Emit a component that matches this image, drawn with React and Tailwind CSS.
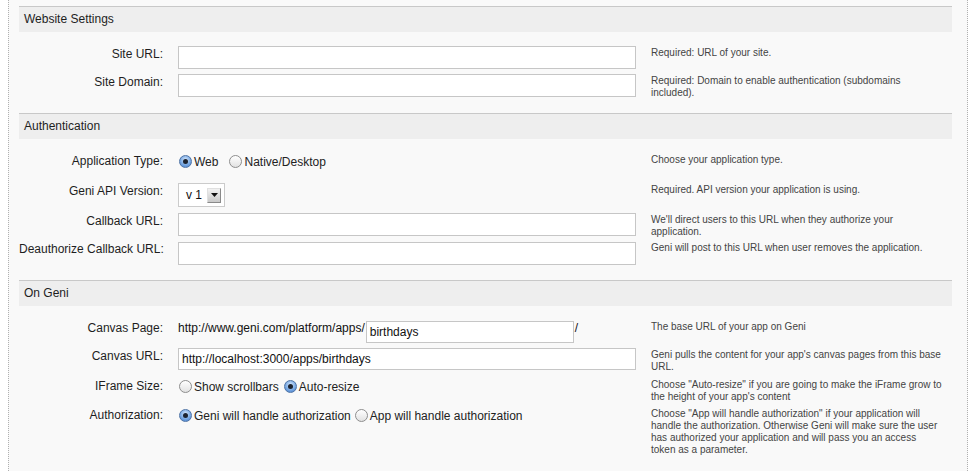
import React from 'react';

const Radio = ({ checked }) =>
  checked ? (
    <span className="flex h-[13px] w-[13px] shrink-0 items-center justify-center rounded-full border border-[#4f74a6] bg-[radial-gradient(circle_at_50%_35%,#d7e8fc,#7aaae4_55%,#3f78c8)]">
      <span className="h-[5px] w-[5px] rounded-full bg-[#1c2330]" />
    </span>
  ) : (
    <span className="block h-[13px] w-[13px] shrink-0 rounded-full border border-[#8e8e8e] bg-[linear-gradient(#ffffff,#e2e2e2)]" />
  );

const RadioOption = ({ checked, label, className = '' }) => (
  <label className={`flex h-[15px] items-center ${className}`}>
    <span className="ml-[1px] block">
      <Radio checked={checked} />
    </span>
    <span className="ml-[2px] leading-[14px] text-[#222]">{label}</span>
  </label>
);

const TextInput = ({ value = '', className = 'w-[458px] h-[23px]' }) => (
  <div className={`flex items-center border border-[#c6c6c6] bg-white pl-[3px] text-[12px] text-[#111] ${className}`}>
    {value}
  </div>
);

const Header = ({ title }) => (
  <div className="h-[26px] border-t border-[#c8c8c8] bg-[#eeeeee] pl-[5px] leading-[25px] text-[#1e1e1e]">
    {title}
  </div>
);

const Row = ({ label, height, help, children }) => (
  <div className="flex" style={height ? { height } : undefined}>
    <div className="mr-[15px] w-[144px] whitespace-nowrap pt-[1px] text-right leading-[14px] text-[#1e1e1e]">{label}</div>
    <div className="mr-[15px] w-[458px]">{children}</div>
    <div className="w-[301px] pt-[1px] pr-[10px] text-[10px] leading-[12px] text-[#444]">{help}</div>
  </div>
);

const Section = ({ title, children }) => (
  <div>
    <Header title={title} />
    <div className="pt-[14px] pb-[11px]">{children}</div>
  </div>
);

const VersionSelect = () => (
  <div className="flex h-[24px] w-[47px] items-center border border-[#cbcbcb] bg-white">
    <span className="ml-[7px] text-[12px] text-[#111]">v 1</span>
    <span className="ml-[5px] flex h-[15px] w-[14px] items-center justify-center border border-t-[#e0e0e0] border-l-[#e0e0e0] border-r-[#8a8a8a] border-b-[#8a8a8a] bg-[linear-gradient(#f2f2f2,#c9c9c9)]">
      <svg width="7" height="4" viewBox="0 0 7 4">
        <path d="M0 0h7L3.5 4z" fill="#111" />
      </svg>
    </span>
  </div>
);

export default function App() {
  return (
    <div className="min-h-screen bg-white font-['Liberation_Sans',Arial,sans-serif] text-[12px]">
      <div className="ml-[8px] min-h-screen w-[960px] border-x border-dotted border-[#b0b0b0] bg-[#f9f9f9] pt-[6px] pr-[15px] pl-[10px]">
        <Section title="Website Settings">
          <Row label="Site URL:" height={28} help="Required: URL of your site.">
            <TextInput />
          </Row>
          <Row label="Site Domain:" height={28} help="Required: Domain to enable authentication (subdomains included).">
            <TextInput />
          </Row>
        </Section>

        <Section title="Authentication">
          <Row label="Application Type:" height={30} help="Choose your application type.">
            <div className="flex pt-[1px]">
              <RadioOption checked label="Web" className="mr-[10px]" />
              <RadioOption label="Native/Desktop" />
            </div>
          </Row>
          <Row label="Geni API Version:" height={30} help="Required. API version your application is using.">
            <VersionSelect />
          </Row>
          <Row label="Callback URL:" height={28} help="We'll direct users to this URL when they authorize your application.">
            <TextInput />
          </Row>
          <Row label="Deauthorize Callback URL:" height={28} help="Geni will post to this URL when user removes the application.">
            <div className="pt-[1px]">
              <TextInput />
            </div>
          </Row>
        </Section>

        <Section title="On Geni">
          <Row label="Canvas Page:" height={28} help="The base URL of your app on Geni">
            <div className="flex items-start pt-[1px]">
              <span className="leading-[14px] text-[#111]">http://www.geni.com/platform/apps/</span>
              <div className="ml-[1px]">
                <TextInput value="birthdays" className="h-[22px] w-[208px]" />
              </div>
              <span className="ml-[1px] leading-[14px] text-[#111]">/</span>
            </div>
          </Row>
          <Row label="Canvas URL:" height={30} help="Geni pulls the content for your app's canvas pages from this base URL.">
            <TextInput value="http://localhost:3000/apps/birthdays" className="h-[22px] w-[458px]" />
          </Row>
          <Row label="IFrame Size:" height={29} help={'Choose "Auto-resize" if you are going to make the iFrame grow to the height of your app\'s content'}>
            <div className="flex pt-[1px]">
              <RadioOption label="Show scrollbars" className="mr-[4px]" />
              <RadioOption checked label="Auto-resize" />
            </div>
          </Row>
          <Row
            label="Authorization:"
            help={'Choose "App will handle authorization" if your application will handle the authorization. Otherwise Geni will make sure the user has authorized your application and will pass you an access token as a parameter.'}
          >
            <div className="flex pt-[1px]">
              <RadioOption checked label="Geni will handle authorization" className="mr-[3px]" />
              <RadioOption label="App will handle authorization" />
            </div>
          </Row>
        </Section>
      </div>
    </div>
  );
}
